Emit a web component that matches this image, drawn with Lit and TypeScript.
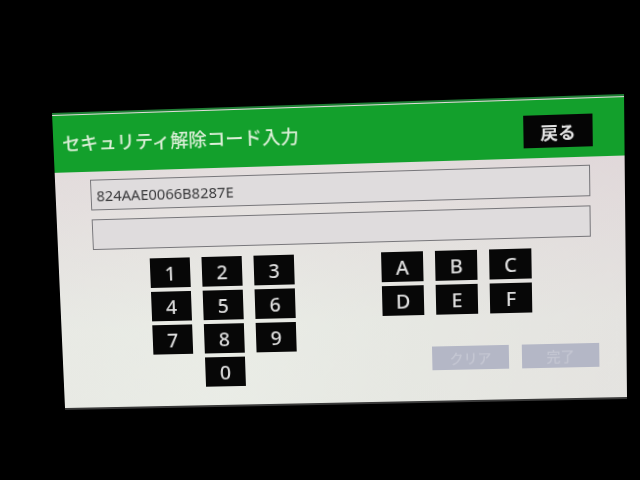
import { LitElement, html, css } from "lit";
import { customElement } from "lit/decorators.js";

const W = 572, H = 300;
// Photographed corners of the panel: TL, TR, BR, BL
const CORNERS = [[52, 113], [624, 94], [627, 397], [65, 408]];

function homography(w: number, h: number, q: number[][]): string {
  const [[x0, y0], [x1, y1], [x2, y2], [x3, y3]] = q;
  const dx1 = x1 - x2, dx2 = x3 - x2, sx = x0 - x1 + x2 - x3;
  const dy1 = y1 - y2, dy2 = y3 - y2, sy = y0 - y1 + y2 - y3;
  const d = dx1 * dy2 - dx2 * dy1;
  const g = (sx * dy2 - dx2 * sy) / d;
  const k = (dx1 * sy - sx * dy1) / d;
  const a = x1 - x0 + g * x1, b = x3 - x0 + k * x3;
  const e = y1 - y0 + g * y1, f = y3 - y0 + k * y3;
  const m = [
    a / w, e / w, 0, g / w,
    b / h, f / h, 0, k / h,
    0, 0, 1, 0,
    x0, y0, 0, 1,
  ];
  return `matrix3d(${m.map((n) => n.toFixed(8)).join(",")})`;
}

@customElement("app-root")
export class AppRoot extends LitElement {
  static styles = css`
    :host {
      display: block;
      width: 640px;
      height: 480px;
      background: #000;
      overflow: hidden;
      position: relative;
      font-family: "Noto Sans CJK JP", "Noto Sans", sans-serif;
    }
    .panel {
      position: absolute;
      left: 0;
      top: 0;
      width: 572px;
      height: 300px;
      transform-origin: 0 0;
      display: flex;
      flex-direction: column;
      background:
        linear-gradient(180deg, rgba(224, 214, 216, 0.7) 50px, rgba(232, 236, 228, 0.55) 220px),
        linear-gradient(100deg, #e8e6e4 0%, #ebece8 35%, #e4e2e0 65%, #e0d8db 100%);
      filter: blur(0.45px);
    }
    .edge {
      height: 2px;
      background: #1f7f35;
      margin-bottom: 1px;
      flex: none;
    }
    .header {
      height: 57px;
      flex: none;
      background: #13a02c;
      display: flex;
      align-items: center;
      justify-content: space-between;
      padding: 0 31px 0 9px;
    }
    .title {
      color: #dcefd8;
      font-size: 18.6px;
      font-weight: 500;
      margin-bottom: 5px;
    }
    .back {
      width: 68px;
      height: 32px;
      margin-top: 5px;
      background: #050505;
      color: #e4e4e4;
      font-size: 17.5px;
      font-weight: 700;
      display: flex;
      align-items: center;
      justify-content: center;
    }
    .body {
      flex: 1;
      display: flex;
      flex-direction: column;
      padding: 8px 34px 0 36px;
    }
    .field {
      height: 31px;
      box-sizing: border-box;
      border: 1px solid #77767a;
      background: #dfdcdd;
      display: flex;
      align-items: center;
      padding-left: 5px;
      font-family: "Noto Sans", sans-serif;
      font-size: 15px;
      color: #3a3a3c;
      margin-bottom: 9px;
    }
    .pads {
      display: flex;
      padding: 1px 0 0 58px;
      gap: 88px;
    }
    .pad {
      display: grid;
      grid-template-columns: repeat(3, 41px);
      grid-auto-rows: 30px;
      column-gap: 12px;
      row-gap: 4px;
      align-self: flex-start;
    }
    .pad.hex {
      grid-template-columns: repeat(3, 42px);
    }
    .key {
      background: #070707;
      color: #dedede;
      font-family: "Noto Sans", sans-serif;
      font-size: 20px;
      font-weight: 500;
      display: flex;
      align-items: center;
      justify-content: center;
    }
    .zero {
      grid-column: 2;
    }
    .actions {
      align-self: flex-end;
      display: flex;
      gap: 13px;
      margin-top: -36px;
      margin-right: -7px;
    }
    .action {
      width: 77px;
      height: 24px;
      background: #b4b7c6;
      color: #c4c6d2;
      font-size: 14px;
      font-weight: 500;
      display: flex;
      align-items: center;
      justify-content: center;
    }
    .lip {
      position: absolute;
      left: 0;
      right: 0;
      bottom: -2px;
      height: 2px;
      background: #3a3a3a;
    }
  `;

  render() {
    const digits = ["1", "2", "3", "4", "5", "6", "7", "8", "9"];
    const hex = ["A", "B", "C", "D", "E", "F"];
    return html`
      <div class="panel" style="transform:${homography(W, H, CORNERS)}">
        <div class="edge"></div>
        <div class="header">
          <span class="title">セキュリティ解除コード入力</span>
          <span class="back">戻る</span>
        </div>
        <div class="body">
          <div class="field">824AAE0066B8287E</div>
          <div class="field"></div>
          <div class="pads">
            <div class="pad">
              ${digits.map((d) => html`<div class="key">${d}</div>`)}
              <div class="key zero">0</div>
            </div>
            <div class="pad hex">
              ${hex.map((d) => html`<div class="key">${d}</div>`)}
            </div>
          </div>
          <div class="actions">
            <div class="action">クリア</div>
            <div class="action">完了</div>
          </div>
        </div>
        <div class="lip"></div>
      </div>
    `;
  }
}
